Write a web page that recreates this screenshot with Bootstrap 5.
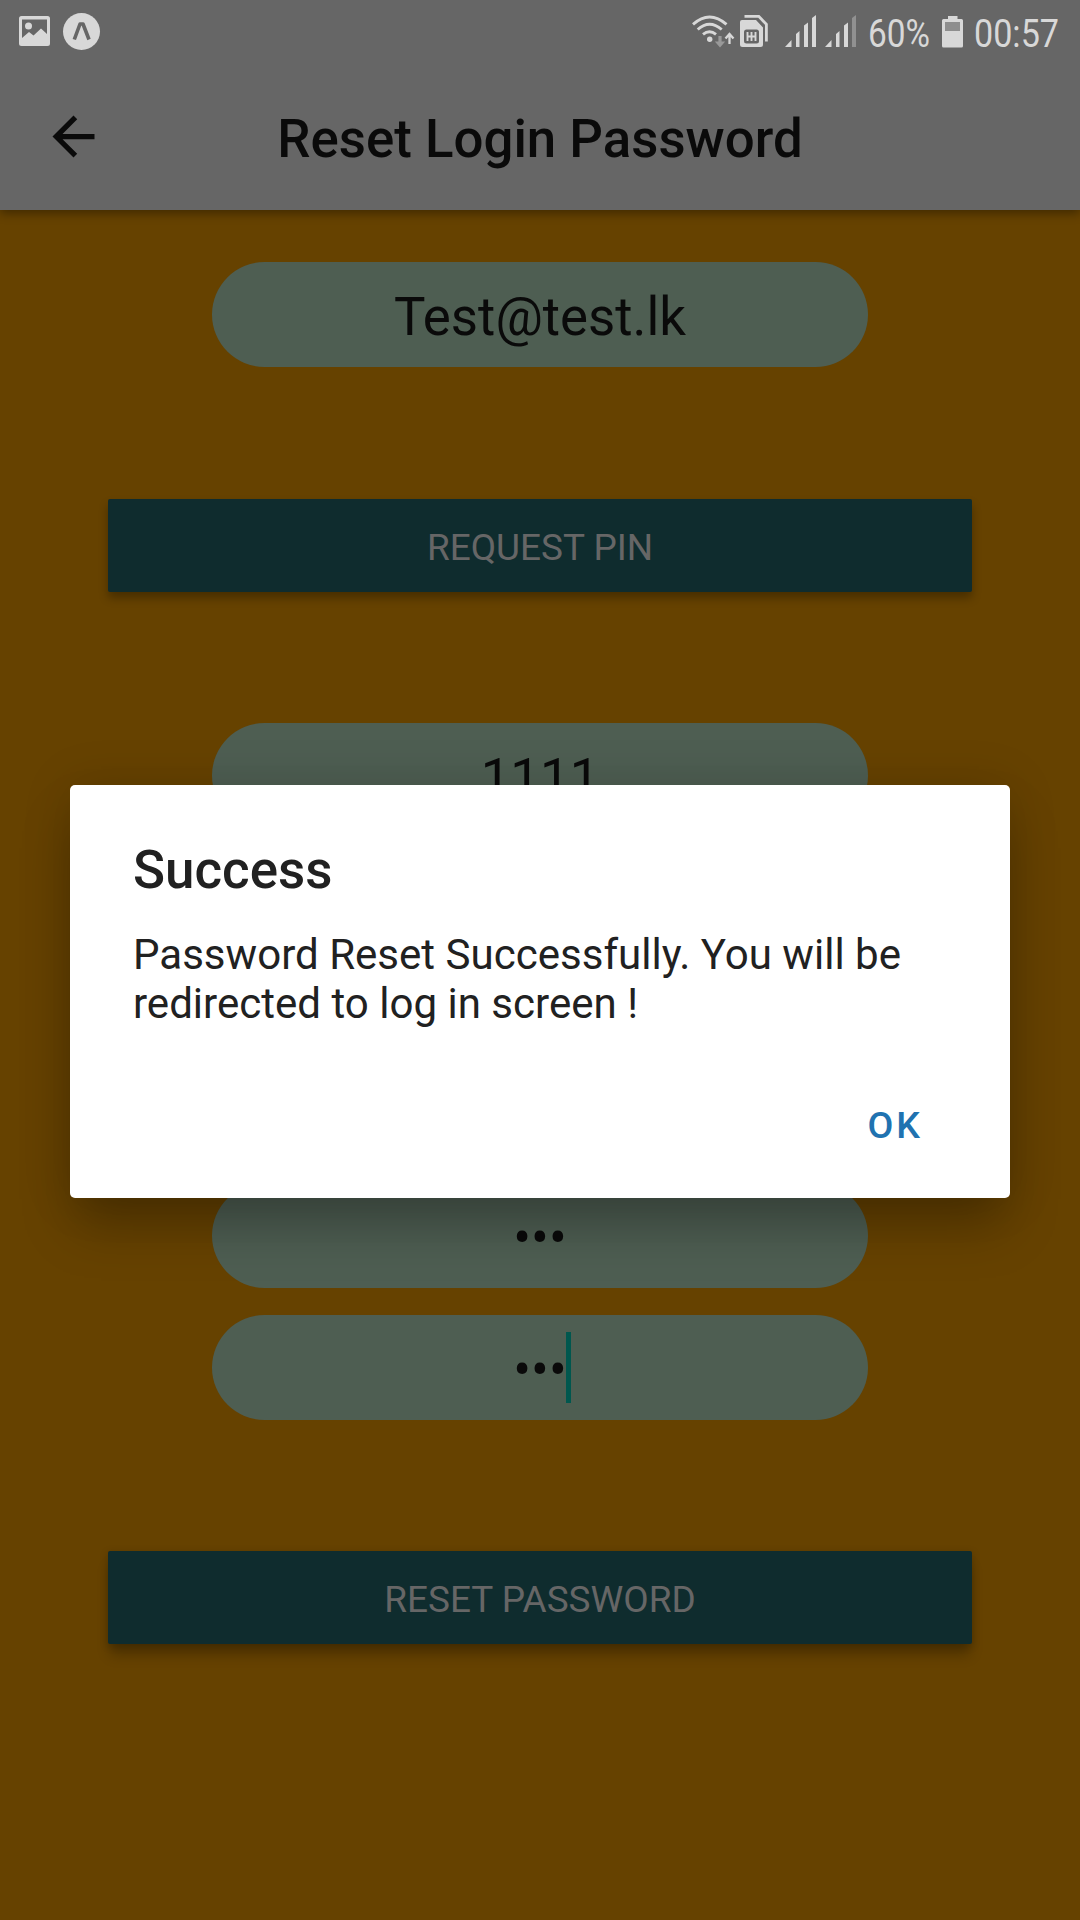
<!DOCTYPE html>
<html lang="en">
<head>
<meta charset="utf-8">
<meta name="viewport" content="width=device-width, initial-scale=1">
<title>Reset Login Password</title>
<link href="https://cdn.jsdelivr.net/npm/bootstrap@5.3.0/dist/css/bootstrap.min.css" rel="stylesheet">
<style>
body{font-family:Roboto,"Liberation Sans",sans-serif;background:#664200;color:#0a0a0a;width:1080px;height:1920px;overflow:hidden}
.app-header{height:210px;background:#666;box-shadow:0 3px 10px rgba(0,0,0,.4)}
.status-row{height:64px}
.title-row{height:146px;padding:0 42px 0}
.title-row h1{font-size:52.8px;font-weight:500;line-height:60px;padding-top:3px}
.title-row svg{margin-top:-1px}
.side{width:63px}
.form-area{padding-top:52px}
.pill{width:656px;height:105px;border-radius:52.5px;background:#4e5e52;font-size:52.8px;line-height:105px;padding-top:3px;text-align:center}
.pill-caret{width:5px;height:71px;background:#00574e;margin:14px -4px 0 -1px}
.action{width:864px;height:93px;border-radius:2px;background:#0f2c2e;color:#666;font-size:36.95px;line-height:93px;padding:2px 0 0;border:0;box-shadow:0 6px 10px rgba(0,0,0,.3)}
.action-deep{box-shadow:0 13px 12px -2px rgba(0,0,0,.24),0 2px 8px rgba(0,0,0,.2)}
.gap-field{margin-top:27px}
.gap-action{margin-top:131px}
.gap-request{margin-top:132px}
.gap-hidden{margin-top:355px}
.alert-box{left:70px;top:785px;width:940px;height:413px;border-radius:5px;background:#fff;color:#212121;padding:54px 63px;box-shadow:0 32px 50px -6px rgba(0,0,0,.27),0 0 50px rgba(0,0,0,.13)}
.alert-box h2{font-size:52.9px;font-weight:500;line-height:62px;margin:0 0 29px}
.alert-box p{font-size:42.05px;line-height:49px;margin:0 0 75px;white-space:nowrap}
.ok-link{font-size:37.500px;font-weight:500;letter-spacing:3px;line-height:44px;color:#2072b0;padding:0;border:0;margin-right:24px}
</style>
</head>
<body>
<header class="app-header position-relative">
  <div class="status-row d-flex justify-content-between">
    <svg width="120" height="64" viewBox="0 0 120 64">
      <path fill="#d8d8d8" fill-rule="evenodd" d="M21.5 16h26a2.5 2.5 0 0 1 2.5 2.5v25a2.5 2.5 0 0 1-2.5 2.5h-26a2.5 2.5 0 0 1-2.5-2.5v-25a2.5 2.5 0 0 1 2.5-2.5zM22 19.500V38l7-6 4.500 3.500 7.500-7 6 5.500V19.500z"/>
      <circle cx="28.500" cy="26" r="3.500" fill="#d8d8d8"/>
      <circle cx="81.500" cy="31.500" r="18.500" fill="#d8d8d8"/>
      <path d="M74.300 39.500L80 24h3L89 39.500" fill="none" stroke="#666" stroke-width="3.600" stroke-linejoin="round"/>
    </svg>
    <svg width="400" height="64" viewBox="680 0 400 64" font-family="Roboto, sans-serif" font-size="38.500" fill="#d8d8d8">
      <g fill="none" stroke="#d8d8d8" stroke-width="2.900">
        <path d="M693 24.300Q709.500 9.500 726.500 24.300"/>
        <path d="M697.700 29.500Q709.500 19 721.700 29.500"/>
        <path d="M703 34.300Q709.500 29 716 34.300"/>
      </g>
      <circle cx="709.700" cy="39.200" r="2.700"/>
      <path fill="#999" d="M718.400 36h3.200v5.500h3.600L720 47.500l-5.200-6h3.600z"/>
      <path fill="none" stroke="#d8d8d8" stroke-width="2.300" d="M729.500 44V34M725.500 38.500l4-4.500 4 4.500"/>
      <path d="M742 20h14l7 7.500V44.500a2.500 2.500 0 0 1-2.500 2.500h-18a2.500 2.500 0 0 1-2.500-2.500V22a2 2 0 0 1 2-2z"/>
      <path fill="none" stroke="#d8d8d8" stroke-width="2.800" d="M744.500 16.400h14.300l7.600 8V41.500"/>
      <rect x="744" y="29.500" width="15" height="14" rx="2.500" fill="#666"/>
      <path fill="none" stroke="#d8d8d8" stroke-width="1.900" d="M747.500 32v9M751.500 32v9M755.500 32v9M747.500 36.500h8"/>
      <path d="M785 47l6.500-7V47zM796 47V34l3.500-3V47zM804 47V25.500l4-3V47zM812 47V18l4-3V47z"/>
      <path d="M825 47l6.500-7V47zM836 47V34l3.500-3V47zM844 47V25.500l4-3V47z"/>
      <path fill="#919191" d="M852 47V18l4-3V47z"/>
      <text x="868" y="47" textLength="62" lengthAdjust="spacingAndGlyphs">60%</text>
      <path d="M948 16h9.500v3h4a1.500 1.500 0 0 1 1.500 1.500V46a1.500 1.500 0 0 1-1.500 1.500h-18A1.500 1.500 0 0 1 942 46V20.500a1.500 1.500 0 0 1 1.500-1.500h4.500z"/>
      <path fill="#8e8e8e" d="M945 22h15v9h-15z"/>
      <text x="974" y="47" textLength="85" lengthAdjust="spacingAndGlyphs">00:57</text>
    </svg>
  </div>
  <div class="title-row d-flex justify-content-between align-items-center">
    <svg class="side" height="63" viewBox="0 0 24 24"><path fill="#0a0a0a" d="M20 11H7.830l5.590-5.590L12 4l-8 8 8 8 1.410-1.410L7.830 13H20z"/></svg>
    <h1 class="m-0">Reset Login Password</h1>
    <span class="side"></span>
  </div>
</header>
<main class="form-area d-flex flex-column align-items-center">
  <div class="pill">Test@test.lk</div>
  <button class="action btn gap-request">REQUEST PIN</button>
  <div class="pill gap-action">1111</div>
  <div class="pill gap-hidden">•••</div>
  <div class="pill gap-field d-flex justify-content-center"><span>•••</span><span class="pill-caret"></span></div>
  <button class="action action-deep btn gap-action">RESET PASSWORD</button>
</main>
<section class="alert-box position-absolute d-flex flex-column" role="alertdialog">
  <h2>Success</h2>
  <p>Password Reset Successfully. You will be<br>redirected to log in screen !</p>
  <button class="ok-link btn align-self-end">OK</button>
</section>
<script src="https://cdn.jsdelivr.net/npm/bootstrap@5.3.0/dist/js/bootstrap.bundle.min.js"></script>
</body>
</html>
